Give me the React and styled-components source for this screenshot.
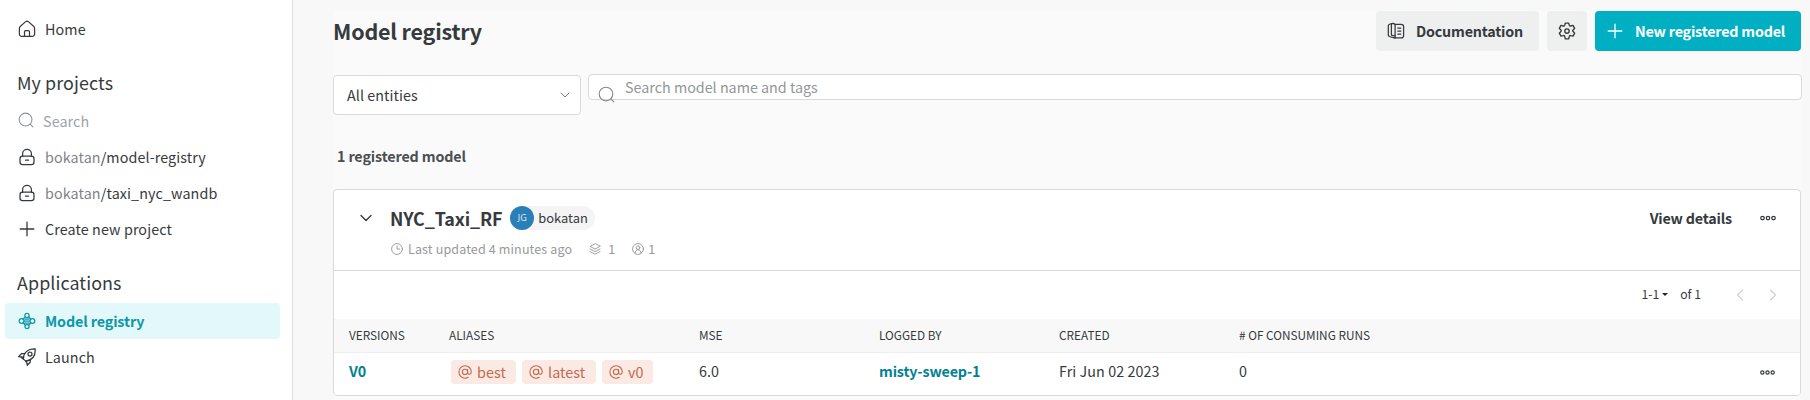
import React from "react";
import styled, { createGlobalStyle } from "styled-components";

const Global = createGlobalStyle`
  * { box-sizing: border-box; }
  body {
    margin: 0;
    background: #f8f8f8;
    color: #363a3d;
    font-family: "Noto Sans CJK JP", "Noto Sans CJK SC", "Open Sans", sans-serif;
    font-size: 14.32px;
    line-height: 20px;
    overflow: hidden;
  }
  svg { display: block; flex: none; }
`;

const Page = styled.div`
  display: flex;
  height: 400px;
  overflow: hidden;
`;

const Sidebar = styled.nav`
  width: 293px;
  flex: none;
  padding: 11px 12px 0 5px;
  background: #fff;
  border-right: 1px solid #dcdddd;
`;

const NavItem = styled.div`
  display: flex;
  align-items: center;
  gap: 9px;
  height: 36px;
  padding-left: 13px;
  border-radius: 4px;
  color: ${(p) => (p.$active ? "#0e97a7" : "#363a3d")};
  background: ${(p) => (p.$active ? "#e3f8fa" : "transparent")};
  font-weight: ${(p) => (p.$active ? 600 : 400)};
  letter-spacing: ${(p) => (p.$active ? "-0.12px" : "0.1px")};
`;

const SearchItem = styled(NavItem)`
  height: 37px;
  gap: 8px;
  color: #9ca3ad;
  svg { color: #8e949e; }
`;

const SectionTitle = styled.h2`
  margin: 0;
  height: ${(p) => p.$height}px;
  padding: 22px 0 0 12px;
  font-size: 17.9px;
  font-weight: 400;
  line-height: 26px;
  letter-spacing: 0.08px;
`;

const Muted = styled.span`
  color: #7f8388;
`;

const Main = styled.main`
  flex: 1;
  min-width: 0;
  padding: 10px 9px 0 40px;
`;

const Content = styled.div`
  height: 390px;
  background: #fafafa;
`;

const Header = styled.header`
  display: flex;
  align-items: center;
  gap: 8px;
  height: 42px;
`;

const PageTitle = styled.h1`
  flex: 1;
  margin: 0;
  font-size: 21.5px;
  font-weight: 600;
  line-height: 32px;
  letter-spacing: -0.2px;
`;

const Button = styled.button`
  display: flex;
  align-items: center;
  gap: 11px;
  width: ${(p) => p.$width}px;
  height: 40px;
  padding: 0 0 0 11px;
  border: 0;
  border-radius: 4px;
  background: ${(p) => (p.$primary ? "#00afc2" : "#eef0f0")};
  color: ${(p) => (p.$primary ? "#fff" : "#363a3d")};
  font: inherit;
  font-weight: 600;
  letter-spacing: -0.2px;
  white-space: nowrap;
`;

const Filters = styled.div`
  display: flex;
  align-items: flex-start;
  gap: 7px;
  margin: 22px -1px 0 0;
`;

const Select = styled.div`
  display: flex;
  align-items: center;
  justify-content: space-between;
  width: 248px;
  height: 40px;
  margin-top: 1px;
  padding: 0 9px 0 13px;
  border: 1px solid #d8dada;
  border-radius: 4px;
  background: #fff;
  letter-spacing: 0.06px;
  svg { color: #75797c; }
`;

const SearchBox = styled.div`
  display: flex;
  align-items: flex-start;
  gap: 9px;
  flex: 1;
  height: 26px;
  padding: 2px 0 0 9px;
  border: 1px solid #d8dada;
  border-radius: 4px;
  background: #fff;
  color: #939699;
  svg { margin-top: 9px; color: #85888b; }
`;

const Count = styled.div`
  margin: 31px 0 22px;
  padding: 0 4px;
  height: 21px;
  font-weight: 600;
  letter-spacing: -0.13px;
  color: #4b4f52;
`;

const Card = styled.section`
  border: 1px solid #d8dada;
  border-radius: 4px;
  background: #fff;
  height: 207px;
  overflow: hidden;
`;

const CardHeader = styled.div`
  display: flex;
  height: 81px;
  padding: 16px 24px 0 26px;
  border-bottom: 1px solid #d8dada;
`;

const Expand = styled.div`
  width: 30px;
  padding-top: 6px;
`;

const CardInfo = styled.div`
  flex: 1;
`;

const TitleRow = styled.div`
  display: flex;
  align-items: center;
  gap: 8px;
  height: 24px;
`;

const ModelName = styled.h3`
  margin: 0;
  font-size: 17.9px;
  line-height: 24px;
  font-weight: 600;
  letter-spacing: -0.16px;
`;

const EntityPill = styled.div`
  display: flex;
  align-items: center;
  gap: 4px;
  width: 85px;
  height: 24px;
  border-radius: 12px;
  background: #f4f4f4;
  font-size: 12.9px;
`;

const Avatar = styled.span`
  width: 24px;
  height: 24px;
  border-radius: 50%;
  background: #2980b9;
  color: #e2edf5;
  font: 9px/24px "Open Sans", sans-serif;
  text-align: center;
`;

const MetaRow = styled.div`
  display: flex;
  gap: 17px;
  margin: 9px 0 0 1px;
  color: #979a9d;
  font-size: 12.53px;
  letter-spacing: 0.14px;
`;

const Meta = styled.span`
  display: flex;
  align-items: center;
  gap: ${(p) => p.$gap}px;
`;

const CardActions = styled.div`
  display: flex;
  align-items: center;
  gap: 28px;
  height: 24px;
  font-weight: 600;
  letter-spacing: -0.18px;
`;

const Pagination = styled.div`
  display: flex;
  align-items: center;
  justify-content: flex-end;
  height: 48px;
  padding: 0 21px 2px 0;
  font-size: 12.2px;
`;

const Caret = styled.span`
  margin: 0 12px 0 3px;
  border: 3px solid transparent;
  border-top-color: #222;
  border-bottom: 0;
`;

const Pager = styled.span`
  display: flex;
  gap: 21px;
  margin: 1px 0 0 33px;
  color: #cfd1d2;
`;

const Row = styled.div`
  display: grid;
  grid-template-columns: 100px 250px 180px 180px 180px 1fr 16px;
  align-items: center;
  height: ${(p) => (p.$head ? 34 : 43)}px;
  padding: ${(p) => (p.$head ? "0 24px 1px 15px" : "0 24px 7px 15px")};
  background: ${(p) => (p.$head ? "#f8f8f8" : "#fff")};
  border-bottom: ${(p) => (p.$head ? "1px solid #eee" : "0")};
  font-size: ${(p) => (p.$head ? "11.8px" : "14.32px")};
  letter-spacing: ${(p) => (p.$head ? "0" : "0.08px")};
`;

const Link = styled.a`
  color: #038194;
  font-weight: 600;
  letter-spacing: -0.16px;
`;

const VersionLink = styled(Link)`
  padding-bottom: 1px;
`;

const Tags = styled.div`
  display: flex;
  gap: 6px;
  padding: 2px 0 0 2px;
`;

const Tag = styled.span`
  display: flex;
  align-items: center;
  gap: 5px;
  width: ${(p) => p.$width}px;
  height: 24px;
  padding: 0 0 1px 7px;
  border-radius: 4px;
  background: #fbe9e3;
  color: #c4694f;
`;

const RowMenu = styled.span`
  padding-top: 2px;
`;

const Icon = ({ size = 18, box = 18, stroke = 1.25, children }) => (
  <svg width={size} height={size} viewBox={`0 0 ${box} ${box}`} fill="none" stroke="currentColor"
    strokeWidth={stroke} strokeLinecap="round" strokeLinejoin="round">{children}</svg>
);

const HomeIcon = () => (
  <Icon>
    <path d="M3.7 16.4A2.3 2.3 0 0 1 1.4 14V8.4c0-.9.4-1.6 1-2.1L7.4 1.9a2.4 2.4 0 0 1 3.2 0l5 4.4c.6.5 1 1.2 1 2.1V14a2.3 2.3 0 0 1-2.3 2.4z" />
    <path d="M6.5 16.4v-4.6c0-.8.4-1.2 1.2-1.2h2.6c.8 0 1.2.4 1.2 1.2v4.6" />
  </Icon>
);
const SearchIcon = ({ size = 18 }) => (
  <Icon size={size} stroke={1.15}><circle cx="8" cy="8" r="6.8" /><path d="m12.8 12.8 3 3" /></Icon>
);
const LockIcon = () => (
  <Icon>
    <path d="M4.6 8.2V5.8a4.4 4.4 0 0 1 8.8 0v2.4" />
    <rect x="2" y="8.2" width="14" height="8.4" rx="2.6" />
    <path d="M7.5 12.2h3" />
  </Icon>
);
const PlusIcon = () => <Icon stroke={1.3}><path d="M9 2.2v13.6M2.2 9h13.6" /></Icon>;
const RegistryIcon = () => (
  <Icon>
    <circle cx="9" cy="3.4" r="2.1" /><circle cx="9" cy="14.6" r="2.1" />
    <circle cx="3.6" cy="9" r="2.4" /><circle cx="14.4" cy="9" r="2.4" />
    <path d="M6 9h6M7.2 5 5.100 7.100M10.800 5 12.900 7.100M7.200 13 5.100 10.900M10.800 13 12.900 10.900M7 7h4M7 11h4" />
  </Icon>
);
const RocketIcon = () => (
  <Icon>
    <path d="M5.300 11C5.500 5.200 9.300.7 17.200.900c.4 7.300-3.300 11.500-9.500 12.200z" />
    <circle cx="12" cy="6" r="2" />
    <path d="M6.800 5.700 3.700 5.500.6 8.600l5 .5M12.400 11.300l-.2 2.900-2.900 3.100-.9-4.400M5.500 11l-3-2M7.700 13l1.800 3.400" />
  </Icon>
);
const BookIcon = () => (
  <Icon>
    <path d="M6 1.400C3.500 1.800 1.300 2.400 1.300 4v9.200c0 1.400 2 1.800 6.800 3V3.400c0-1.100-.7-1.900-2.100-2z" />
    <path d="M4.400 1.900v11.200c1 .5 2.200.7 3.700.8M8.100 2.300h6c1.500 0 2.500.8 2.500 2.200v9.200c0 1.400-1 2.200-2.500 2.200h-6M10.800 6h3M10.800 9h3M10.800 12h3" />
  </Icon>
);
const GearIcon = () => (
  <Icon stroke={1.35}>
    <circle cx="9" cy="9" r="2.2" />
    <path d="M7.300 1.100h3.400l.6 2.100c.2.6.9.9 1.500.8l2.200-.6 1.700 2.900-1.600 1.600c-.5.5-.5 1.200 0 1.700l1.600 1.600-1.700 2.900-2.200-.5c-.6-.2-1.300.2-1.500.8l-.6 2.500H7.300l-.6-2.500c-.2-.6-.9-1-1.500-.8l-2.200.5-1.700-2.900 1.600-1.600c.5-.5.5-1.200 0-1.700L1.300 6.300 3 3.400l2.200.6c.6.1 1.300-.2 1.500-.8z" />
  </Icon>
);
const ClockIcon = () => (
  <Icon size={12} box={12} stroke={0.95}><circle cx="6" cy="6" r="5.4" /><path d="M6 3v3h2.600" /></Icon>
);
const LayersIcon = () => (
  <Icon size={12} box={12} stroke={0.95}>
    <path d="M6 .8 1 3.400 6 6l5-2.600zM1 6l5 2.600L11 6M1 8.600l5 2.600 5-2.600" />
  </Icon>
);
const UserIcon = () => (
  <Icon size={12} box={12} stroke={0.95}>
    <circle cx="6" cy="6" r="5.400" /><circle cx="6" cy="4.700" r="1.800" /><path d="M3 10c.2-2 1.200-3.200 3-3.200S8.800 8 9 10" />
  </Icon>
);
const DotsIcon = ({ size = 16 }) => (
  <Icon size={size} box={16} stroke={1.25}>
    <circle cx="2.500" cy="8" r="1.750" /><circle cx="8" cy="8" r="1.750" /><circle cx="13.500" cy="8" r="1.750" />
  </Icon>
);
const DownIcon = ({ stroke, small }) => (
  <Icon size={12} box={12} stroke={stroke}><path d={small ? "m2 4 4 4 4-4" : "m1 3.500 5 5 5-5"} /></Icon>
);
const PageIcon = ({ next }) => (
  <Icon size={12} box={12} stroke={1.2}><path d={next ? "m3.500 1 5 5-5 5" : "m8.500 1-5 5 5 5"} /></Icon>
);
const AtIcon = () => (
  <Icon size={14} box={14} stroke={1.1}>
    <circle cx="7" cy="6.900" r="2.600" />
    <path d="M9.600 4.500v2.800c0 2.700 3.700 2.500 3.700-.5A6.200 6.200 0 1 0 7 13.200c1.300 0 2.300-.3 3.200-.9" />
  </Icon>
);

const columns = ["VERSIONS", "ALIASES", "MSE", "LOGGED BY", "CREATED", "# OF CONSUMING RUNS"];
const aliases = [["best", 65], ["latest", 74], ["v0", 51]];

export default function App() {
  return (
    <Page>
      <Global />
      <Sidebar>
        <NavItem><HomeIcon />Home</NavItem>
        <SectionTitle $height={55}>My projects</SectionTitle>
        <SearchItem><SearchIcon size={17} />Search</SearchItem>
        <NavItem><LockIcon /><span><Muted>bokatan</Muted>/model-registry</span></NavItem>
        <NavItem><LockIcon /><span><Muted>bokatan</Muted>/taxi_nyc_wandb</span></NavItem>
        <NavItem><PlusIcon />Create new project</NavItem>
        <SectionTitle $height={56}>Applications</SectionTitle>
        <NavItem $active><RegistryIcon />Model registry</NavItem>
        <NavItem><RocketIcon />Launch</NavItem>
      </Sidebar>
      <Main>
        <Content>
          <Header>
            <PageTitle>Model registry</PageTitle>
            <Button $width={163}><BookIcon />Documentation</Button>
            <Button $width={40}><GearIcon /></Button>
            <Button $width={206} $primary><PlusIcon />New registered model</Button>
          </Header>
          <Filters>
            <Select>All entities<DownIcon stroke={1} small /></Select>
            <SearchBox><SearchIcon />Search model name and tags</SearchBox>
          </Filters>
          <Count>1 registered model</Count>
          <Card>
            <CardHeader>
              <Expand><DownIcon stroke={1.4} /></Expand>
              <CardInfo>
                <TitleRow>
                  <ModelName>NYC_Taxi_RF</ModelName>
                  <EntityPill><Avatar>JG</Avatar>bokatan</EntityPill>
                </TitleRow>
                <MetaRow>
                  <Meta $gap={5}><ClockIcon />Last updated 4 minutes ago</Meta>
                  <Meta $gap={7}><LayersIcon />1</Meta>
                  <Meta $gap={4}><UserIcon />1</Meta>
                </MetaRow>
              </CardInfo>
              <CardActions>View details<DotsIcon /></CardActions>
            </CardHeader>
            <Pagination>
              1-1<Caret />of 1
              <Pager><PageIcon /><PageIcon next /></Pager>
            </Pagination>
            <Row $head>{columns.map((c) => <span key={c}>{c}</span>)}</Row>
            <Row>
              <VersionLink>V0</VersionLink>
              <Tags>{aliases.map(([name, w]) => <Tag key={name} $width={w}><AtIcon />{name}</Tag>)}</Tags>
              <span>6.0</span>
              <Link>misty-sweep-1</Link>
              <span>Fri Jun 02 2023</span>
              <span>0</span>
              <RowMenu><DotsIcon size={15} /></RowMenu>
            </Row>
          </Card>
        </Content>
      </Main>
    </Page>
  );
}
